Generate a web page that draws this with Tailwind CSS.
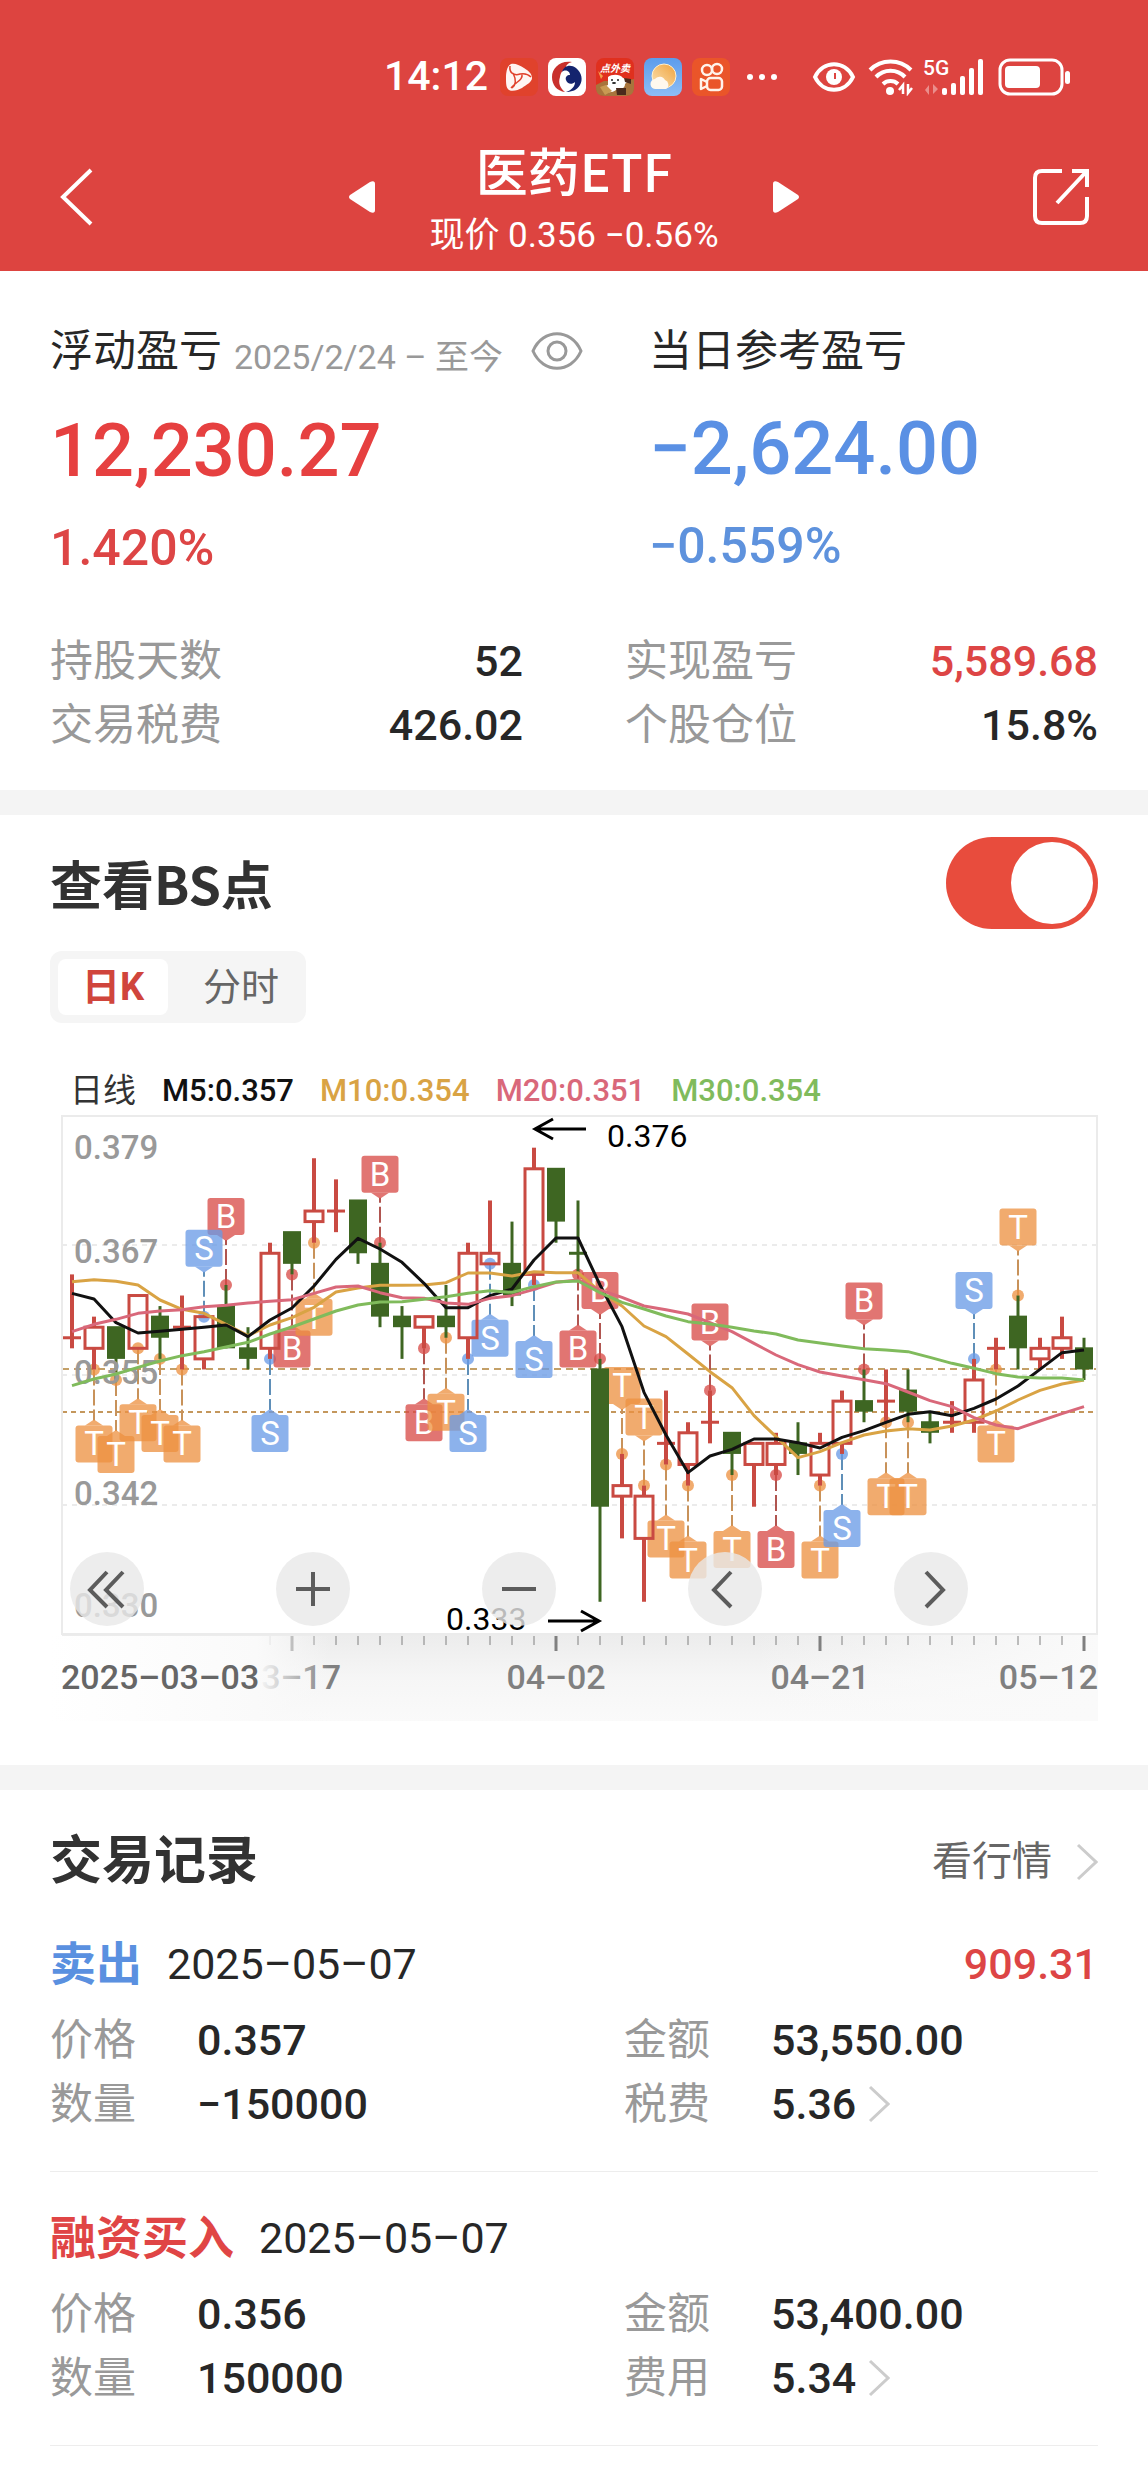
<!DOCTYPE html>
<html lang="zh-CN">
<head>
    <meta charset="UTF-8">
    <meta name="viewport" content="width=device-width, initial-scale=1.0">
    <title>医药ETF - 持仓盈亏</title>
    <script src="https://cdn.jsdelivr.net/npm/@tailwindcss/browser@4"></script>
</head>
<body class="bg-white text-[#272727] font-['Roboto','Noto_Sans_CJK_SC',sans-serif]">

    <!-- Header -->
    <header class="bg-[#dd4440] text-white pt-[49px] pb-[14px]">
        <div class="flex items-center justify-end h-14 pr-[77px]">
            <span class="text-[41px] font-medium mr-3">14:12</span>
            <div class="flex gap-[10px]">
                <svg class="size-[38px]" viewBox="0 0 38 38">
                    <rect width="38" height="38" rx="8" fill="#e0422c"/>
                    <path d="M11 6c4-1 8 1 13 4c5 3 8 6 8 10c0 4-6 7-10 10c-4 2-9 4-13 2c-3-2-3-7-3-12c0-6 1-12 5-14z" fill="#fff5f2"/>
                    <path d="M10 8c-1 7 4 10 10 8c5-1 8 0 11 3M22 16c1 6-5 7-11 14M12 30c5-4 4-9 1-15" fill="none" stroke="#e0422c" stroke-width="1.500"/>
                </svg>
                <svg class="size-[38px]" viewBox="0 0 38 38">
                    <rect width="38" height="38" rx="8" fill="#fff"/>
                    <path d="M24 4C12 2 4 10 4 19c0 8 5 14 13 15c-5-4-7-9-5-15c1-6 4-8 7-7c-3-4 1-7 5-8z" fill="#c8302c"/>
                    <path d="M14 14c2-7 9-8 14-4c6 5 7 12 4 17c-3 5-8 7-14 7c6-2 9-6 9-10c-3 3-8 2-9-2c-1-3 1-5 4-5c0-4-5-6-8-3z" fill="#14246e"/>
                </svg>
                <svg class="size-[38px]" viewBox="0 0 38 38">
                    <rect width="38" height="38" rx="8" fill="#e0301e"/>
                    <path d="M0 27l8-4l22 0l8-2v9c0 5-3 8-8 8H8c-5 0-8-3-8-8z" fill="#a8743c"/>
                    <text x="19" y="14" font-size="10" font-weight="700" font-style="italic" text-anchor="middle" fill="#fff">点外卖</text>
                    <path d="M2 13l5 5l-2 3z" fill="#f3a04c"/>
                    <path d="M12 19c4-3 12-3 15 1l6 2l-4 4c0 4-4 6-9 6c-4 3-9 3-12 0c-1-2 1-4 4-5z" fill="#fff"/>
                    <path d="M28 20l7 1v5l-6-2zM20 30h10v7h-9z" fill="#4a2a1c"/>
                    <path d="M4 29l6-2l6 6l-7 4z" fill="#c99a52"/>
                    <circle cx="16" cy="22" r="1" fill="#222"/><circle cx="22" cy="22" r="1" fill="#222"/>
                    <ellipse cx="18" cy="25" rx="2" ry="1" fill="#222"/>
                </svg>
                <svg class="size-[38px]" viewBox="0 0 38 38">
                    <defs>
                        <linearGradient id="sky" x1="0" y1="0" x2="0" y2="1"><stop stop-color="#5c9cec"/><stop offset="1" stop-color="#8dbdf5"/></linearGradient>
                        <linearGradient id="sun" x1="1" y1="0" x2="0" y2="1"><stop stop-color="#f0a23c"/><stop offset="1" stop-color="#fbe3b4"/></linearGradient>
                    </defs>
                    <rect width="38" height="38" rx="8" fill="url(#sky)"/>
                    <circle cx="20" cy="18" r="12" fill="url(#sun)" stroke="#fdf0d0"/>
                    <path d="M12 31a5 5 0 0 1-1-10a6 6 0 0 1 10 1a5 5 0 0 1 1 9z" fill="#fff8ee"/>
                </svg>
                <svg class="size-[38px]" viewBox="0 0 38 38" fill="none" stroke="#fff3ea" stroke-width="2.500">
                    <rect width="38" height="38" rx="8" fill="#ea5529" stroke="none"/>
                    <circle cx="15" cy="12" r="5"/><circle cx="25" cy="11" r="5"/>
                    <rect x="15" y="20" width="15" height="12" rx="3.500"/>
                    <path d="M15 24l-6-3v10l6-3" stroke-linejoin="round"/>
                </svg>
            </div>
            <svg class="w-8 h-2 ml-4" viewBox="0 0 32 8" fill="#fff"><circle cx="4" cy="4" r="3"/><circle cx="16" cy="4" r="3"/><circle cx="28" cy="4" r="3"/></svg>
            <svg class="w-11 h-8 ml-[34px]" viewBox="0 0 44 32" fill="none" stroke="#fff" stroke-width="4">
                <path d="M3 16C11 -1 33 -1 41 16C33 33 11 33 3 16z"/>
                <circle cx="22" cy="16" r="8" fill="#fff" stroke="none"/>
                <path d="M23 12v6" stroke="#dd4440" stroke-width="2"/>
            </svg>
            <svg class="w-[46px] h-[38px] ml-3" viewBox="0 0 46 38" fill="none" stroke="#fff" stroke-width="4">
                <path d="M2 12a29 29 0 0 1 41 0M8 19a20 20 0 0 1 29 0M15 26a11 11 0 0 1 15 0"/>
                <circle cx="22" cy="33" r="4" fill="#fff" stroke="none"/>
                <path d="M35 36V27l-4 5M40 26v9l4-5" stroke-width="2.500"/>
            </svg>
            <svg class="w-[60px] h-[38px] ml-[10px] overflow-visible" viewBox="0 0 60 38" fill="#fff">
                <text x="-1" y="17" font-size="21" font-weight="500">5G</text>
                <path d="M5 37V27l-4 5zM9 26v10l5-5z" fill-opacity=".4"/>
                <rect x="18" y="30" width="5" height="7" rx="2"/>
                <rect x="27" y="25" width="5" height="12" rx="2"/>
                <rect x="36" y="18" width="5" height="19" rx="2"/>
                <rect x="45" y="10" width="5" height="27" rx="2"/>
                <rect x="54" y="1" width="5" height="36" rx="2"/>
            </svg>
            <svg class="w-[73px] h-[38px] ml-[14px]" viewBox="0 0 73 38">
                <rect x="2" y="2" width="62" height="34" rx="10" fill="none" stroke="#fff" stroke-width="3"/>
                <rect x="7" y="8" width="35" height="22" rx="4" fill="#fff"/>
                <rect x="67" y="13" width="5" height="13" rx="2.500" fill="#fff"/>
            </svg>
        </div>

        <nav class="relative flex items-center justify-between mt-8 h-[120px] px-14">
            <button type="button" aria-label="返回" class="w-10 h-16">
                <svg class="w-10 h-16" viewBox="0 0 40 64" fill="none" stroke="#fff" stroke-width="4"><path d="M35 5L7 32L35 59"/></svg>
            </button>
            <div class="absolute inset-x-0 mx-auto w-[450px] flex items-center justify-between">
                <button type="button" aria-label="上一只">
                    <svg class="w-[26px] h-8" viewBox="0 0 26 32" fill="#fff"><path d="M1 14L21 1Q26 -1 26 3V29Q26 33 21 31L1 18Q-1 16 1 14z"/></svg>
                </button>
                <div class="text-center pt-[10px]">
                    <h1 class="text-[52px] leading-[64px] font-medium font-['Noto_Sans_CJK_SC',sans-serif]">医药ETF</h1>
                    <p class="text-[35px] leading-[60px] mt-1">现价 0.356 −0.56%</p>
                </div>
                <button type="button" aria-label="下一只">
                    <svg class="w-[26px] h-8" viewBox="0 0 26 32" fill="#fff"><path d="M25 14L5 1Q0 -1 0 3V29Q0 33 5 31L25 18Q27 16 25 14z"/></svg>
                </button>
            </div>
            <button type="button" aria-label="分享" class="size-[60px]">
                <svg class="size-[60px]" viewBox="0 0 60 60" fill="none" stroke="#fff" stroke-width="4">
                    <path d="M30 4H10Q3 4 3 11V49Q3 56 10 56H48Q55 56 55 49V30M40 4H55V20M54 5L25 36"/>
                </svg>
            </button>
        </nav>
    </header>

    <main>
        <!-- Profit summary -->
        <section class="px-[50px] pt-[50px] pb-[33px]">
            <div class="grid grid-cols-[599fr_449fr]">
                <div>
                    <div class="flex items-center h-[60px]">
                        <h2 class="text-[43px]">浮动盈亏</h2>
                        <span class="text-[34px] text-[#999] ml-3 mt-3">2025/2/24 – 至今</span>
                        <button type="button" aria-label="隐藏金额" class="ml-7">
                            <svg class="w-[52px] h-10" viewBox="0 0 52 40" fill="none" stroke="#999" stroke-width="3"><path d="M2 20C12 -3 40 -3 50 20C40 43 12 43 2 20z"/><circle cx="26" cy="20" r="9"/></svg>
                        </button>
                    </div>
                    <div class="text-[74px] font-medium text-[#e64040] h-[100px] leading-[100px] mt-5">12,230.27</div>
                    <div class="text-[50px] font-medium text-[#dd4545] h-[70px] leading-[70px] mt-3">1.420%</div>
                </div>
                <div>
                    <h2 class="text-[43px] h-[60px] leading-[60px]">当日参考盈亏</h2>
                    <div class="text-[74px] font-medium text-[#5a90e4] h-[100px] leading-[100px] mt-[18px]">−2,624.00</div>
                    <div class="text-[50px] font-medium text-[#5e92dd] h-[70px] leading-[70px] mt-3">−0.559%</div>
                </div>
            </div>
            <dl class="grid grid-cols-2 gap-x-[102px] mt-[46px] text-[43px] leading-[64px]">
                <div class="flex justify-between"><dt class="text-[#999]">持股天数</dt><dd class="font-medium">52</dd></div>
                <div class="flex justify-between"><dt class="text-[#999]">实现盈亏</dt><dd class="font-medium text-[#dd4545]">5,589.68</dd></div>
                <div class="flex justify-between"><dt class="text-[#999]">交易税费</dt><dd class="font-medium">426.02</dd></div>
                <div class="flex justify-between"><dt class="text-[#999]">个股仓位</dt><dd class="font-medium">15.8%</dd></div>
            </dl>
        </section>

        <div class="h-[25px] bg-[#f4f4f4]"></div>

        <!-- K-line chart -->
        <section class="px-[50px] pt-[22px] pb-11">
            <div class="flex items-center justify-between h-[92px]">
                <label for="bsSwitch" class="text-[52px] font-bold text-[#323232] font-['Noto_Sans_CJK_SC',sans-serif]">查看BS点</label>
                <input id="bsSwitch" type="checkbox" role="switch" checked class="appearance-none w-[152px] h-[92px] rounded-full bg-[#e84c3d] p-[5px] flex justify-end before:content-[''] before:size-[82px] before:rounded-full before:bg-white">
            </div>

            <div class="flex items-center w-fit h-[72px] mt-[22px] pl-2 rounded-xl bg-[#f5f5f5] text-[38px]">
                <button type="button" class="w-[110px] h-14 rounded-lg bg-white font-bold text-[#d0453c] leading-none">日K</button>
                <button type="button" class="w-[130px] h-14 ml-2 text-[#666] leading-none">分时</button>
            </div>

            <div class="flex gap-[26px] mt-12 pl-5 text-[31px] leading-10 font-medium h-10">
                <span class="font-normal text-[#333] text-[33px]">日线</span>
                <span class="text-[#111]">M5:0.357</span>
                <span class="text-[#d9a344]">M10:0.354</span>
                <span class="text-[#d9687a]">M20:0.351</span>
                <span class="text-[#80bb5c]">M30:0.354</span>
            </div>

            <div class="relative">
                <svg id="kline" class="block w-full" viewBox="0 6 1048 610" role="img" aria-label="日K线图"></svg>
                <div class="absolute left-5 top-[441px] flex gap-[132px]">
                    <button type="button" aria-label="最早" class="size-[74px] rounded-full bg-[#e8e8e8]/80">
                        <svg class="size-[74px]" viewBox="0 0 74 74" fill="none" stroke="#5c5c5c" stroke-width="4"><path d="M37 20L20 38L37 55M53 20L36 38L53 55"/></svg>
                    </button>
                    <button type="button" aria-label="放大" class="size-[74px] rounded-full bg-[#e8e8e8]/80">
                        <svg class="size-[74px]" viewBox="0 0 74 74" fill="none" stroke="#5c5c5c" stroke-width="4"><path d="M20 37H54M37 20V54"/></svg>
                    </button>
                    <button type="button" aria-label="缩小" class="size-[74px] rounded-full bg-[#e8e8e8]/80">
                        <svg class="size-[74px]" viewBox="0 0 74 74" fill="none" stroke="#5c5c5c" stroke-width="4"><path d="M20 37H54"/></svg>
                    </button>
                    <button type="button" aria-label="向前" class="size-[74px] rounded-full bg-[#e8e8e8]/80">
                        <svg class="size-[74px]" viewBox="0 0 74 74" fill="none" stroke="#5c5c5c" stroke-width="4"><path d="M43 20L26 38L43 55"/></svg>
                    </button>
                    <button type="button" aria-label="向后" class="size-[74px] rounded-full bg-[#e8e8e8]/80">
                        <svg class="size-[74px]" viewBox="0 0 74 74" fill="none" stroke="#5c5c5c" stroke-width="4"><path d="M32 20L49 38L32 55"/></svg>
                    </button>
                </div>
            </div>
        </section>

        <div class="h-[25px] bg-[#f4f4f4]"></div>

        <!-- Trade records -->
        <section class="px-[50px] pt-9">
            <div class="flex items-center justify-between h-[72px]">
                <h2 class="text-[52px] font-bold text-[#323232]">交易记录</h2>
                <a href="#" class="flex items-center text-[40px] text-[#666]">看行情
                    <svg class="w-[22px] h-10 ml-6" viewBox="0 0 22 40" fill="none" stroke="#ccc" stroke-width="3"><path d="M2 3L20 20L2 37"/></svg>
                </a>
            </div>

            <article class="pt-[34px] pb-[35px] border-b border-[#ededed] text-[43px] leading-[64px]">
                <div class="flex items-center">
                    <h3 class="text-[46px] font-bold text-[#5a90e0]">卖出</h3>
                    <time datetime="2025-05-07" class="ml-[25px]">2025–05–07</time>
                    <span class="ml-auto font-medium text-[#dd4545]">909.31</span>
                </div>
                <dl class="grid grid-cols-[147px_427px_147px_1fr] mt-3">
                    <dt class="text-[#999]">价格</dt><dd class="font-medium">0.357</dd>
                    <dt class="text-[#999]">金额</dt><dd class="font-medium">53,550.00</dd>
                    <dt class="text-[#999]">数量</dt><dd class="font-medium">−150000</dd>
                    <dt class="text-[#999]">税费</dt>
                    <dd class="flex items-center font-medium">5.36
                        <svg class="w-[22px] h-10 ml-3" viewBox="0 0 22 40" fill="none" stroke="#ccc" stroke-width="3"><path d="M2 3L20 20L2 37"/></svg>
                    </dd>
                </dl>
            </article>

            <article class="pt-[34px] pb-[35px] border-b border-[#ededed] text-[43px] leading-[64px]">
                <div class="flex items-center">
                    <h3 class="text-[46px] font-bold text-[#e04545]">融资买入</h3>
                    <time datetime="2025-05-07" class="ml-[25px]">2025–05–07</time>
                </div>
                <dl class="grid grid-cols-[147px_427px_147px_1fr] mt-3">
                    <dt class="text-[#999]">价格</dt><dd class="font-medium">0.356</dd>
                    <dt class="text-[#999]">金额</dt><dd class="font-medium">53,400.00</dd>
                    <dt class="text-[#999]">数量</dt><dd class="font-medium">150000</dd>
                    <dt class="text-[#999]">费用</dt>
                    <dd class="flex items-center font-medium">5.34
                        <svg class="w-[22px] h-10 ml-3" viewBox="0 0 22 40" fill="none" stroke="#ccc" stroke-width="3"><path d="M2 3L20 20L2 37"/></svg>
                    </dd>
                </dl>
            </article>
        </section>
    </main>

    <script>
        // [type, body top, body bottom, high, low], prices in 1/1000
        // r = up (hollow), g = down (filled)
        var candles = [
            ['r',358,358,364,357], ['r',359,357,360,355], ['g',359,356,359,354], ['r',362,357,362,357],
            ['g',360,358,361,356], ['r',359,359,362,355], ['r',360,356,360,355], ['g',361,357,363,357],
            ['g',357,356,359,355], ['r',366,357,367,356], ['g',368,365,368,364], ['r',370,369,375,367],
            ['r',370,370,373,368], ['g',371,366,371,365], ['g',365,360,367,359], ['g',360,359,361,356],
            ['r',360,359,360,357], ['g',360,359,363,358], ['r',366,358,367,356], ['r',366,365,371,365],
            ['g',365,362,369,361], ['r',374,364,376,363], ['g',374,369,374,367], ['g',366,366,371,364],
            ['g',355,342,356,333], ['r',344,343,347,339], ['r',343,339,344,333], ['r',348,348,353,346],
            ['r',349,346,350,344], ['r',350,350,353,348], ['g',349,347,349,345], ['r',348,346,348,342],
            ['r',348,346,349,345], ['g',348,347,350,345], ['r',348,345,349,344], ['r',352,348,353,347],
            ['g',352,351,355,350], ['r',352,352,355,350], ['g',353,351,355,350], ['g',350,349,351,348],
            ['r',350,350,352,349], ['r',354,350,356,349], ['r',357,357,358,355], ['g',360,357,362,355],
            ['r',357,356,358,355], ['r',358,357,360,356], ['g',357,355,358,354]
        ];

        // [candle index, letter, 1 = above the high / 0 = below the low]
        var marks = [
            [1,'T',0], [2,'T',0], [3,'T',0], [4,'T',0], [5,'T',0], [7,'B',1], [6,'S',1], [9,'S',0], [10,'B',0],
            [11,'T',0], [14,'B',1], [16,'B',0], [17,'T',0], [18,'S',0], [19,'S',0], [21,'S',0], [23,'B',0],
            [24,'B',1], [25,'T',1], [26,'T',1], [27,'T',0], [28,'T',0], [29,'B',1], [30,'T',0], [32,'B',0],
            [34,'T',0], [35,'S',0], [36,'B',1], [37,'T',0], [38,'T',0], [41,'S',1], [42,'T',0], [43,'T',1]
        ];
        var markFill = { B: '#d84a46', S: '#689ae6', T: '#ed9140' };
        var markLine = { B: '#b05550', S: '#5f8fb8', T: '#c8925a' };

        // moving averages, heights in thirds of a unit
        var averages = {
            '#d9a344': [695,689,694,705,750,778,790,823,857,825,803,772,726,714,706,706,705,698,669,669,678,665,668,668,725,768,828,860,912,965,1013,1097,1160,1223,1205,1178,1155,1143,1136,1140,1128,1110,1083,1050,1021,1002,990],
            '#111111': [730,747,818,849,844,838,832,825,860,810,774,708,628,565,597,637,700,773,773,737,717,630,564,564,705,830,1027,1155,1268,1218,1198,1167,1167,1178,1194,1162,1142,1117,1093,1085,1097,1075,1047,1008,958,908,900],
            '#d9687a': [845,823,808,790,783,779,770,766,759,754,749,730,711,708,728,743,745,759,763,745,737,718,697,690,720,742,768,779,792,818,845,880,915,944,966,978,989,1001,1026,1052,1070,1103,1125,1136,1113,1091,1070],
            '#80bb5c': [1007,987,972,952,933,917,905,891,877,852,831,807,783,765,756,755,748,740,730,722,727,710,696,693,728,757,777,798,815,822,832,843,852,870,879,888,896,900,905,922,940,955,971,981,984,984,990]
        };

        function px(i) { return 22 + 22 * i; }
        function py(p) { return 11 + (379 - p) * 10.56; }

        var out = '';

        function line(x1, y1, x2, y2, color, width, dash) {
            out += '<line x1="' + x1 + '" y1="' + y1 + '" x2="' + x2 + '" y2="' + y2 + '" stroke="' + color + '" stroke-width="' + width + '"' + (dash ? ' stroke-dasharray="' + dash + '"' : '') + '/>';
        }
        function text(x, y, str, color, anchor, size, weight) {
            out += '<text x="' + x + '" y="' + y + '" fill="' + color + '" text-anchor="' + anchor + '" font-size="' + size + '" font-weight="' + weight + '">' + str + '</text>';
        }

        // frame and grid
        out += '<defs>' +
            '<linearGradient id="axisBg" x1="0" y1="0" x2="0" y2="1"><stop stop-color="#ececec"/><stop offset=".5" stop-color="#f6f6f6"/><stop offset="1" stop-color="#fafafa"/></linearGradient>' +
            '<linearGradient id="fadeLeft"><stop stop-color="#ffffff"/><stop offset=".74" stop-color="#fafafa"/><stop offset="1" stop-color="#f8f8f8" stop-opacity="0"/></linearGradient>' +
            '<linearGradient id="fadeRight"><stop stop-color="#fafafa" stop-opacity="0"/><stop offset="1" stop-color="#fafafa"/></linearGradient>' +
            '</defs>';
        out += '<rect x="12" y="530" width="1036" height="86" fill="url(#axisBg)"/>';
        out += '<rect x="700" y="530" width="348" height="86" fill="url(#fadeRight)"/>';
        line(12, 140, 1047, 140, '#ebebeb', 2, '5 5');
        line(12, 270, 1047, 270, '#ebebeb', 2, '5 5');
        line(12, 400, 1047, 400, '#ebebeb', 2, '5 5');
        line(12, 264, 1047, 264, '#c4a068', 2, '7 5');
        line(12, 307, 1047, 307, '#c4975c', 2, '5 4');
        out += '<rect x="12" y="11" width="1035" height="518" fill="none" stroke="#ebebeb" stroke-width="2"/>';

        // B / S / T pins
        marks.forEach(function (m) {
            var x = px(m[0]), c = candles[m[0]], up = m[2];
            var y = py(up ? c[3] : c[4]);
            var top = up ? y - 87 : y + 56;
            line(x, y, x, up ? top + 42 : top - 5, markLine[m[1]], 2, '16 4');
            out += '<g fill="' + markFill[m[1]] + '" fill-opacity=".76"><circle cx="' + x + '" cy="' + y + '" r="6"/>';
            out += '<rect x="' + (x - 18.5) + '" y="' + top + '" width="37" height="37" rx="3"/>';
            out += up ? '<path d="M' + (x - 9) + ' ' + (top + 37) + 'h18l-9 6z"/></g>' : '<path d="M' + (x - 9) + ' ' + top + 'h18l-9 -6z"/></g>';
            text(x, top + 30, m[1], '#fff', 'middle', 33, 400);
        });

        // candles
        candles.forEach(function (c, i) {
            var x = px(i), color = c[0] === 'r' ? '#c94a42' : '#3e6622';
            var t = py(c[1]), b = py(c[2]), h = py(c[3]), l = py(c[4]);
            if (c[1] === c[2]) {
                line(x, h, x, l, color, c[0] === 'r' ? 4 : 3);
                line(x - 9, t, x + 9, t, color, 3);
                return;
            }
            if (c[0] === 'g') {
                line(x, h, x, l, color, 3);
                out += '<rect x="' + (x - 9) + '" y="' + (t - 1) + '" width="18" height="' + (b - t + 1) + '" fill="' + color + '"/>';
            } else {
                line(x, h, x, t, color, 4);
                line(x, b, x, l, color, 4);
                out += '<rect x="' + (x - 9) + '" y="' + t + '" width="18" height="' + (b - t) + '" fill="none" stroke="' + color + '" stroke-width="3"/>';
            }
        });

        // price labels
        text(24, 54, '0.379', '#999', 'start', 33, 500);
        text(24, 158, '0.367', '#999', 'start', 33, 500);
        text(24, 279, '0.355', '#999', 'start', 33, 500);
        text(24, 400, '0.342', '#999', 'start', 33, 500);
        text(24, 512, '0.330', '#999', 'start', 33, 500);

        // moving averages
        Object.keys(averages).forEach(function (color) {
            var pts = averages[color].map(function (v, i) { return px(i) + ',' + (v / 3 - 55); }).join(' ');
            out += '<polyline points="' + pts + '" fill="none" stroke="' + color + '" stroke-width="3" stroke-linejoin="round"/>';
        });

        // highest / lowest price
        out += '<path d="M536 24H485M503 14L485 24L503 34M498 516H549M531 506L549 516L531 526" fill="none" stroke="#000" stroke-width="3"/>';
        text(557, 42, '0.376', '#000', 'start', 32, 400);
        text(396, 525, '0.333', '#000', 'start', 32, 400);

        // date axis
        for (var i = 9; i < 47; i++) {
            var major = i % 12 === 10;
            line(px(i), 531, px(i), major ? 546 : 540, '#808080', major ? 3 : 1);
        }
        text(291, 584, '3–17', '#808080', 'end', 34, 500);
        text(506, 584, '04–02', '#808080', 'middle', 34, 500);
        text(770, 584, '04–21', '#808080', 'middle', 34, 500);
        text(1048, 584, '05–12', '#808080', 'end', 34, 500);
        out += '<rect x="0" y="531" width="280" height="85" fill="url(#fadeLeft)"/>';
        text(11, 584, '2025–03–03', '#666', 'start', 34, 500);

        document.getElementById('kline').innerHTML = out;
    </script>
</body>
</html>
